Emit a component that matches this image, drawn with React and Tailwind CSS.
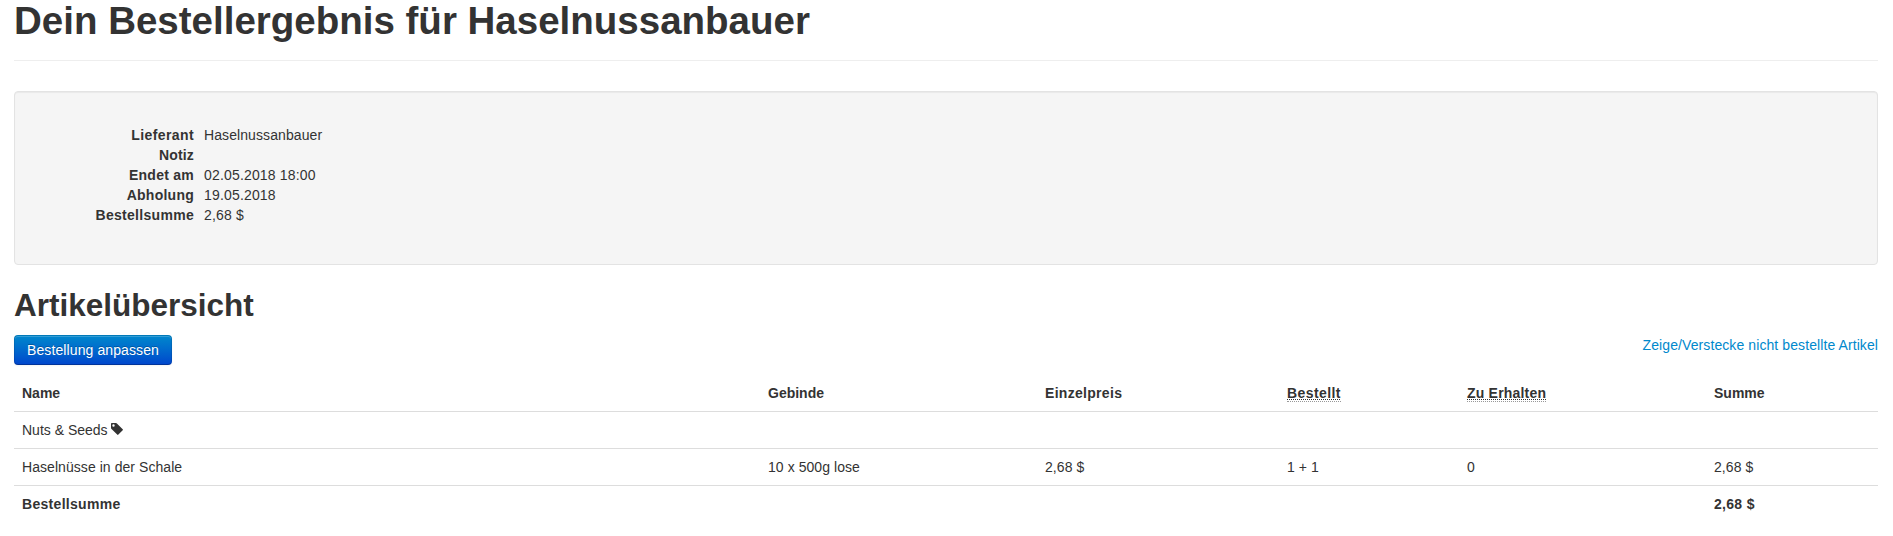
const details = [
  ['Lieferant', 'Haselnussanbauer', 'tracking-[0.4px]', 'tracking-[0.09px]'],
  ['Notiz', '', 'tracking-[0.15px]', ''],
  ['Endet am', '02.05.2018 18:00', 'tracking-[0.25px]', 'tracking-[0.17px]'],
  ['Abholung', '19.05.2018', 'tracking-[0.25px]', 'tracking-[0.17px]'],
  ['Bestellsumme', '2,68 $', 'tracking-[0.3px]', 'tracking-[0.15px]'],
];

function TagIcon() {
  return (
    <svg className="ml-[3px] mt-[3px] h-3 w-3" viewBox="0 0 12 12" fill="#333333" aria-hidden="true">
      <path fillRule="evenodd" d="M0 .8Q0 0 .8 0H5Q5.5 0 5.9.4L11.7 6.2Q12.2 6.7 11.7 7.3L7.4 11.6Q6.8 12.2 6.2 11.6L.5 5.9Q0 5.4 0 4.9ZM2.5 1.3A1.2 1.2 0 1 0 2.5 3.7A1.2 1.2 0 1 0 2.5 1.3Z" />
    </svg>
  );
}

function Abbr({ children }) {
  return (
    <abbr className="border-b border-dotted border-[#999999] underline decoration-dotted decoration-1 underline-offset-[1px] [text-decoration-skip-ink:none]">
      {children}
    </abbr>
  );
}

export default function App() {
  return (
    <div className="ml-[14px] w-[1864px] pt-px font-['Liberation_Sans',Arial,sans-serif] text-sm leading-5 text-[#333333]">
      <header className="mb-[30px] h-[60px] border-b border-[#eeeeee]">
        <h1 className="text-[38.5px] leading-10 font-bold">Dein Bestellergebnis für Haselnussanbauer</h1>
      </header>

      <section className="h-[174px] rounded border border-[#e3e3e3] bg-[#f5f5f5] pt-[33px] pl-[19px] shadow-[inset_0_1px_1px_rgba(0,0,0,0.05)]">
        <dl className="grid grid-cols-[160px_1fr] auto-rows-[20px] gap-x-[10px]">
          {details.map(([label, value, labelTracking, valueTracking]) => (
            <div key={label} className="contents">
              <dt className={`text-right font-bold ${labelTracking}`}>{label}</dt>
              <dd className={valueTracking}>{value}</dd>
            </div>
          ))}
        </dl>
      </section>

      <h2 className="mt-5 mb-[10px] text-[31.5px] leading-10 font-bold">Artikelübersicht</h2>

      <div className="flex items-start justify-between">
        <button className="h-[30px] w-[158px] rounded border border-t-black/10 border-r-black/10 border-b-black/25 border-l-black/10 bg-[#0044cc] bg-linear-to-b from-[#0088cc] to-[#0044cc] bg-origin-border tracking-[0.1px] text-white shadow-[inset_0_1px_0_rgba(255,255,255,0.2),0_1px_2px_rgba(0,0,0,0.05)] [text-shadow:0_-1px_0_rgba(0,0,0,0.25)]">
          Bestellung anpassen
        </button>
        <a className="tracking-[0.09px] text-[#0088cc]">Zeige/Verstecke nicht bestellte Artikel</a>
      </div>

      <table className="mt-[10px] w-full table-fixed border-separate border-spacing-0 text-left [&_td]:border-t [&_td]:border-[#dddddd] [&_td]:p-2 [&_th]:p-2">
        <colgroup>
          <col className="w-[746px]" />
          <col className="w-[277px]" />
          <col className="w-[242px]" />
          <col className="w-[180px]" />
          <col className="w-[247px]" />
          <col />
        </colgroup>
        <thead>
          <tr>
            <th>Name</th>
            <th>Gebinde</th>
            <th className="tracking-[0.3px]">Einzelpreis</th>
            <th className="tracking-[0.4px]"><Abbr>Bestellt</Abbr></th>
            <th className="tracking-[0.2px]"><Abbr>Zu Erhalten</Abbr></th>
            <th>Summe</th>
          </tr>
        </thead>
        <tbody>
          <tr>
            <td colSpan={6}>
              <div className="flex">Nuts &amp; Seeds<TagIcon /></div>
            </td>
          </tr>
          <tr className="tracking-[0.06px]">
            <td>Haselnüsse in der Schale</td>
            <td>10 x 500g lose</td>
            <td>2,68 $</td>
            <td>1 + 1</td>
            <td>0</td>
            <td>2,68 $</td>
          </tr>
          <tr className="font-bold tracking-[0.3px]">
            <td colSpan={5}>Bestellsumme</td>
            <td>2,68 $</td>
          </tr>
        </tbody>
      </table>
    </div>
  );
}
